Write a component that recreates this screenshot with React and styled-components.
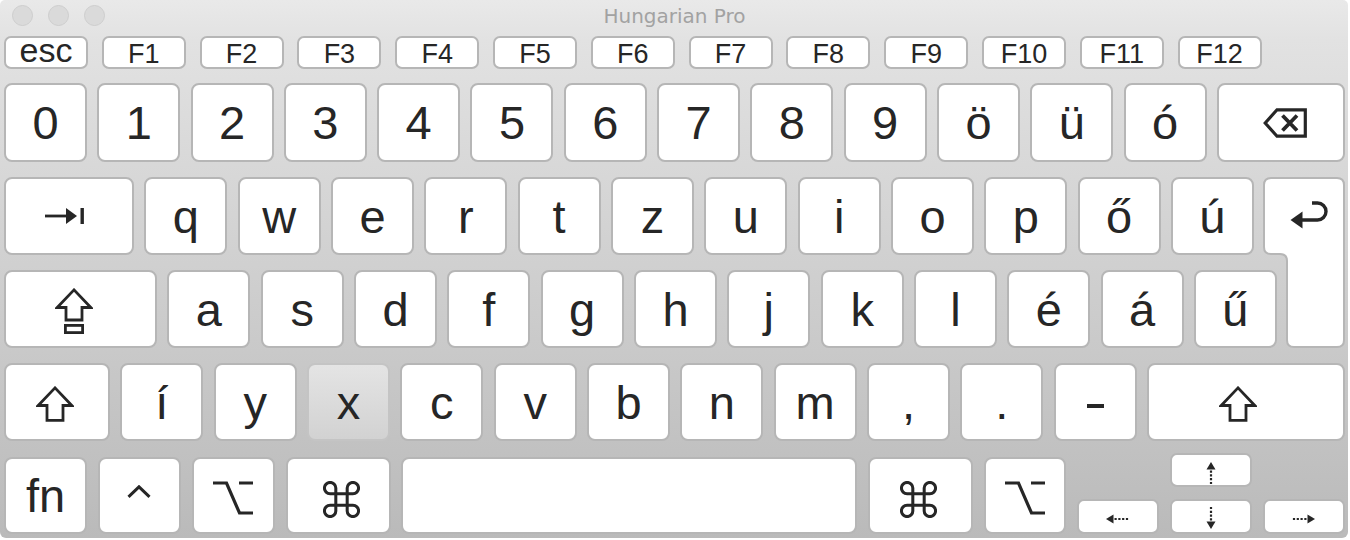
import React from "react";
import styled, { createGlobalStyle } from "styled-components";

const numberKeys = ["0", "1", "2", "3", "4", "5", "6", "7", "8", "9", "ö", "ü", "ó"];
const tabKeys = ["q", "w", "e", "r", "t", "z", "u", "i", "o", "p", "ő", "ú"];
const capsKeys = ["a", "s", "d", "f", "g", "h", "j", "k", "l", "é", "á", "ű"];
const shiftKeys = ["í", "y", "x", "c", "v", "b", "n", "m", ",", ".", "-"];
const fnKeys = ["F1", "F2", "F3", "F4", "F5", "F6", "F7", "F8", "F9", "F10", "F11", "F12"];

const INK = "#262626";

const GlobalStyle = createGlobalStyle`
  html, body {
    margin: 0;
    padding: 0;
    background: #ffffff;
  }
  body {
    font-family: "Liberation Sans", Arial, sans-serif;
  }
  * {
    box-sizing: border-box;
  }
`;

const Window = styled.div`
  width: 1348px;
  height: 538px;
  padding: 0 3px 0 4px;
  display: flex;
  flex-direction: column;
  border-radius: 5px 5px 6px 6px;
  overflow: hidden;
  background: linear-gradient(to bottom, #e9e9e9 0px, #e2e2e2 40px, #bababa 538px);
`;

const TitleBar = styled.div`
  height: 36px;
  display: grid;
  grid-template-columns: 1fr auto 1fr;
  align-items: start;
`;

const Lights = styled.div`
  display: flex;
  gap: 15px;
  padding: 5px 0 0 8px;
`;

const Light = styled.span`
  width: 21px;
  height: 21px;
  border-radius: 50%;
  background: #dadada;
  border: 1px solid #cdcdcd;
`;

const Title = styled.div`
  margin-top: 6px;
  font-family: "DejaVu Sans", "Liberation Sans", sans-serif;
  font-size: 20px;
  line-height: 20px;
  color: #a2a2a2;
`;

const FunctionRow = styled.div`
  display: flex;
  gap: 13.8px;
  height: 33px;
`;

const FKey = styled.div`
  width: 84px;
  flex: none;
  display: flex;
  align-items: center;
  justify-content: center;
  padding: ${({ $small }) => ($small ? "0 0 6px" : "4px 0 0")};
  background: #ffffff;
  border: 2px solid #b6b6b6;
  border-radius: 7px;
  color: ${INK};
  font-size: ${({ $small }) => ($small ? "34px" : "27px")};
  line-height: 1;
`;

const Row = styled.div`
  display: flex;
  justify-content: space-between;
  align-items: ${({ $align }) => $align || "stretch"};
  height: ${({ $h }) => $h}px;
  margin-top: ${({ $mt }) => $mt}px;
`;

const Key = styled.div`
  width: ${({ $w }) => $w || 83}px;
  height: ${({ $h }) => ($h ? `${$h}px` : "auto")};
  flex: none;
  display: flex;
  align-items: center;
  justify-content: center;
  padding: ${({ $pad }) => $pad || "0"};
  background: ${({ $pressed }) =>
    $pressed ? "linear-gradient(to bottom, #e4e4e4, #d2d2d2)" : "#ffffff"};
  border: 2px solid ${({ $pressed }) => ($pressed ? "#c4c4c4" : "#b6b6b6")};
  border-radius: 8px;
  color: ${INK};
  font-size: 47px;
  line-height: 1;
`;

const LetterBlock = styled.div`
  display: grid;
  grid-template-columns: 1fr 23px 59px;
  grid-template-rows: 78px 78px;
  row-gap: 15px;
  margin-top: 15px;
`;

const LetterRow = styled.div`
  display: flex;
  gap: 10.33px;
  grid-column: ${({ $cols }) => $cols};
  grid-row: ${({ $row }) => $row};
`;

const ReturnKey = styled.div`
  position: relative;
  grid-column: 2 / 4;
  grid-row: 1 / 3;
`;

const ReturnShape = styled.svg`
  position: absolute;
  inset: 0;
`;

const ReturnFace = styled.div`
  position: relative;
  height: 78px;
  display: flex;
  align-items: center;
  justify-content: center;
  padding-left: 10px;
`;

const ArrowCluster = styled.div`
  display: grid;
  grid-template-columns: 82px 82px 82px;
  grid-template-rows: 34px 35px;
  column-gap: 11px;
  row-gap: 12px;
`;

const ArrowKey = styled(Key)`
  width: 82px;
  height: auto;
  border-radius: 7px;
  grid-column: ${({ $col }) => $col};
  grid-row: ${({ $row }) => $row};
`;

const Dash = styled.span`
  display: block;
  width: 17px;
  height: 4px;
  margin-top: 8px;
  background: ${INK};
`;

const BackspaceIcon = () => (
  <svg width="44" height="30" viewBox="0 0 44 30">
    <path d="M2.2 15 L14 1.8 H42.3 V28.2 H14 Z" fill="none" stroke={INK} strokeWidth="3.2" />
    <path d="M19.5 7.5 L34 22.5 M34 7.5 L19.5 22.5" stroke={INK} strokeWidth="3.8" />
  </svg>
);

const TabIcon = () => (
  <svg width="40" height="16" viewBox="0 0 40 16">
    <rect x="0" y="6.6" width="23" height="2.8" fill={INK} />
    <path d="M21 0 L32 8 L21 16 Z" fill={INK} />
    <rect x="35.5" y="0" width="3.4" height="16" fill={INK} />
  </svg>
);

const CapsIcon = () => (
  <svg width="38" height="46" viewBox="0 0 38 46">
    <path d="M19 1.9 L2.2 19.5 H11 V32 H27 V19.5 H35.8 Z" fill="none" stroke={INK} strokeWidth="2.8" />
    <rect x="10.4" y="37.4" width="17.2" height="7.2" fill="none" stroke={INK} strokeWidth="2.8" />
  </svg>
);

const ShiftIcon = () => (
  <svg width="38" height="36" viewBox="0 0 38 36">
    <path d="M19 1.9 L2.2 19.5 H11 V34.4 H27 V19.5 H35.8 Z" fill="none" stroke={INK} strokeWidth="2.8" />
  </svg>
);

const ReturnIcon = () => (
  <svg width="39" height="30" viewBox="0 0 39 30">
    <path d="M0.5 19 L12.5 10.5 L12.5 27.5 Z" fill={INK} />
    <path d="M11 19 H27.5 A8.5 8.5 0 0 0 27.5 2 H22" fill="none" stroke={INK} strokeWidth="3.4" />
  </svg>
);

const ControlIcon = () => (
  <svg width="24" height="13" viewBox="0 0 24 13">
    <polyline points="1.5,11.8 12,1.8 22.5,11.8" fill="none" stroke={INK} strokeWidth="3" />
  </svg>
);

const OptionIcon = () => (
  <svg width="40" height="34" viewBox="0 0 40 34">
    <path d="M0 2 H13.5 L26.5 32 H40 M26 2 H40" fill="none" stroke={INK} strokeWidth="3.2" />
  </svg>
);

const CommandIcon = () => (
  <svg width="37" height="37" viewBox="2.25 2.25 19.5 19.5">
    <path
      d="M15 6v12a3 3 0 1 0 3-3H6a3 3 0 1 0 3 3V6a3 3 0 1 0-3 3h12a3 3 0 1 0-3-3"
      fill="none"
      stroke={INK}
      strokeWidth="1.6"
    />
  </svg>
);

const VArrow = ({ down }) => (
  <svg width="10" height="22" viewBox="0 0 10 22" style={down ? { transform: "rotate(180deg)" } : undefined}>
    <path d="M5 0 L0.5 7.5 H9.5 Z" fill={INK} />
    <line x1="5" y1="8.5" x2="5" y2="22" stroke={INK} strokeWidth="2.2" strokeDasharray="2.2 1.6" />
  </svg>
);

const HArrow = ({ right }) => (
  <svg width="23" height="10" viewBox="0 0 23 10" style={right ? { transform: "rotate(180deg)" } : undefined}>
    <path d="M0 5 L7.5 0.5 V9.5 Z" fill={INK} />
    <line x1="8.5" y1="5" x2="23" y2="5" stroke={INK} strokeWidth="2.2" strokeDasharray="2.2 1.6" />
  </svg>
);

export default function App() {
  return (
    <>
      <GlobalStyle />
      <Window>
        <TitleBar>
          <Lights>
            <Light />
            <Light />
            <Light />
          </Lights>
          <Title>Hungarian Pro</Title>
        </TitleBar>

        <FunctionRow>
          <FKey $small>esc</FKey>
          {fnKeys.map((k) => (
            <FKey key={k}>{k}</FKey>
          ))}
        </FunctionRow>

        <Row $h={79} $mt={14}>
          {numberKeys.map((k) => (
            <Key key={k}>{k}</Key>
          ))}
          <Key $w={128} $pad="0 0 0 8px">
            <BackspaceIcon />
          </Key>
        </Row>

        <LetterBlock>
          <LetterRow $cols="1 / 2" $row="1">
            <Key $w={130} $pad="0 8px 0 0">
              <TabIcon />
            </Key>
            {tabKeys.map((k) => (
              <Key key={k}>{k}</Key>
            ))}
          </LetterRow>
          <ReturnKey>
            <ReturnShape width="82" height="171" viewBox="0 0 82 171">
              <path
                d="M8 1 H74 Q81 1 81 8 V163 Q81 170 74 170 H31 Q24 170 24 163 V84 Q24 77 17 77 H8 Q1 77 1 70 V8 Q1 1 8 1 Z"
                fill="#ffffff"
                stroke="#b6b6b6"
                strokeWidth="2"
              />
            </ReturnShape>
            <ReturnFace>
              <ReturnIcon />
            </ReturnFace>
          </ReturnKey>
          <LetterRow $cols="1 / 3" $row="2">
            <Key $w={153} $pad="4px 13px 0 0">
              <CapsIcon />
            </Key>
            {capsKeys.map((k) => (
              <Key key={k}>{k}</Key>
            ))}
          </LetterRow>
        </LetterBlock>

        <Row $h={78} $mt={15}>
          <Key $w={106} $pad="4px 4px 0 0">
            <ShiftIcon />
          </Key>
          {shiftKeys.map((k) =>
            k === "-" ? (
              <Key key={k} aria-label="-">
                <Dash />
              </Key>
            ) : (
              <Key key={k} $pressed={k === "x"}>
                {k}
              </Key>
            )
          )}
          <Key $w={198} $pad="4px 16px 0 0">
            <ShiftIcon />
          </Key>
        </Row>

        <Row $h={81} $mt={12} $align="flex-end">
          <Key $h={77}>fn</Key>
          <Key $h={77} $pad="0 0 9px">
            <ControlIcon />
          </Key>
          <Key $h={77} $pad="5px 0 0">
            <OptionIcon />
          </Key>
          <Key $w={105} $h={77} $pad="7px 0 0 6px">
            <CommandIcon />
          </Key>
          <Key $w={456} $h={77} />
          <Key $w={105} $h={77} $pad="7px 5px 0 0">
            <CommandIcon />
          </Key>
          <Key $w={82} $h={77} $pad="5px 0 0">
            <OptionIcon />
          </Key>
          <ArrowCluster>
            <ArrowKey $col="2" $row="1" $pad="6px 0 0">
              <VArrow />
            </ArrowKey>
            <ArrowKey $col="1" $row="2" $pad="5px 0 0">
              <HArrow />
            </ArrowKey>
            <ArrowKey $col="2" $row="2" $pad="3px 0 0">
              <VArrow down />
            </ArrowKey>
            <ArrowKey $col="3" $row="2" $pad="5px 0 0">
              <HArrow right />
            </ArrowKey>
          </ArrowCluster>
        </Row>
      </Window>
    </>
  );
}
